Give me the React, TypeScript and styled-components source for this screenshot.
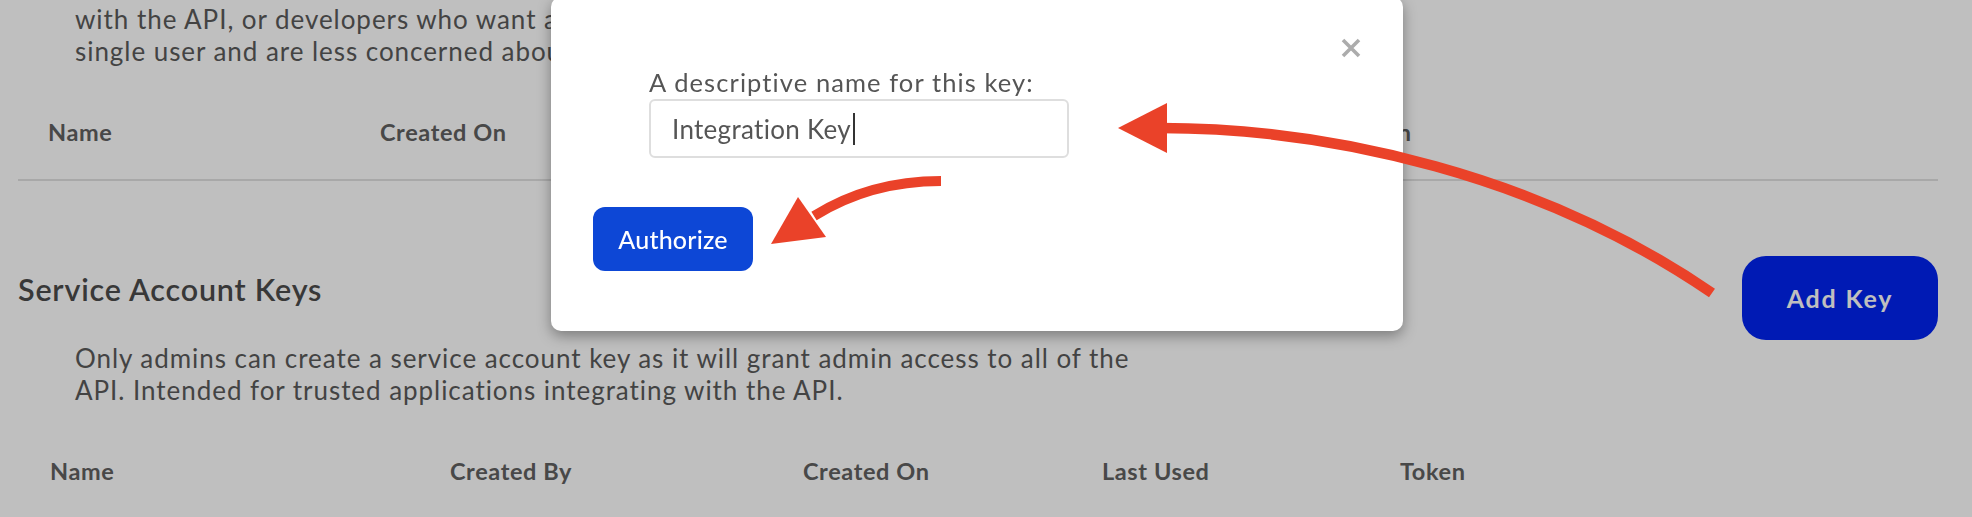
import React from 'react'
import styled, { createGlobalStyle } from 'styled-components'

const GlobalStyle = createGlobalStyle`
  html, body {
    margin: 0;
    height: 100%;
    overflow: hidden;
    background: #ffffff;
  }
  body {
    font-family: Lato, 'Open Sans', sans-serif;
  }
`

const Page = styled.div`
  position: relative;
  padding: 3px 34px 0 18px;
  height: 517px;
  box-sizing: border-box;
`

const Blurb = styled.p`
  margin: ${p => p.$top || 0}px 0 0 57px;
  max-width: 1078px;
  font-size: 26px;
  line-height: 32px;
  letter-spacing: 0.95px;
  color: #5a5a5a;
`

const HeaderRow = styled.div`
  display: grid;
  grid-template-columns: ${p => p.$cols};
  margin-top: 50px;
  padding-left: ${p => p.$inset}px;
`

const HeaderCell = styled.div`
  font-size: 23.5px;
  line-height: 30px;
  font-weight: 700;
  letter-spacing: 0.6px;
  color: #616161;
  white-space: nowrap;
`

const Divider = styled.hr`
  margin: 32px 0 0;
  border: 0;
  height: 2px;
  background: #e0e0e0;
`

const SectionRow = styled.div`
  display: flex;
  justify-content: space-between;
  align-items: flex-start;
  margin-top: 75px;
`

const SectionTitle = styled.h2`
  margin: 15px 0 0;
  font-size: 30.5px;
  line-height: 36px;
  font-weight: 600;
  letter-spacing: 0.8px;
  color: #4b4b4b;
`

const PrimaryButton = styled.button`
  width: ${p => p.$w}px;
  height: ${p => p.$h}px;
  border: 0;
  border-radius: ${p => p.$radius}px;
  background: ${p => p.$bg};
  color: #ffffff;
  font-family: Lato, sans-serif;
  font-size: ${p => p.$size}px;
  font-weight: ${p => p.$weight};
  letter-spacing: ${p => p.$spacing}px;
  padding: 0;
  cursor: pointer;
`

const Backdrop = styled.div`
  position: fixed;
  inset: 0;
  background: rgba(0, 0, 0, 0.25);
`

const Modal = styled.div`
  position: absolute;
  left: 551px;
  top: -3px;
  width: 852px;
  height: 334px;
  box-sizing: border-box;
  padding: 70px 42px 0;
  background: #ffffff;
  border-radius: 10px;
  box-shadow: 0 5px 14px rgba(0, 0, 0, 0.35);
`

const CloseButton = styled.button`
  position: absolute;
  top: 41px;
  right: 42px;
  width: 20px;
  height: 20px;
  padding: 0;
  border: 0;
  background: none;
  cursor: pointer;
  filter: blur(0.4px);
`

const Field = styled.div`
  margin-left: 56px;
  display: flex;
  flex-direction: column;
  gap: 2px;
`

const Label = styled.label`
  font-size: 25.5px;
  line-height: 30px;
  letter-spacing: 1.1px;
  color: #555555;
`

const TextBox = styled.div`
  width: 420px;
  height: 59px;
  box-sizing: border-box;
  display: flex;
  align-items: center;
  padding-left: 21px;
  border: 2px solid #dedede;
  border-radius: 6px;
  font-size: 26px;
  letter-spacing: 0.3px;
  color: #555555;
`

const Caret = styled.span`
  display: inline-block;
  width: 2px;
  height: 32px;
  margin-left: 2px;
  background: #333333;
`

const Actions = styled.div`
  margin-top: 49px;
`

const Annotations = styled.svg`
  position: absolute;
  left: 0;
  top: 0;
  pointer-events: none;
`

const ARROW = '#ea4229'

export default function App() {
  return (
    <>
      <GlobalStyle />
      <Page>
        <Blurb>
          with the API, or developers who want a quick way to get started. Keys belong to a
          <br />
          single user and are less concerned about fine grained access.
        </Blurb>
        <HeaderRow $cols="332px 770px 196px auto" $inset={30}>
          <HeaderCell>Name</HeaderCell>
          <HeaderCell>Created On</HeaderCell>
          <HeaderCell>Last Used</HeaderCell>
          <HeaderCell>Token</HeaderCell>
        </HeaderRow>
        <Divider />

        <SectionRow>
          <SectionTitle>Service Account Keys</SectionTitle>
          <PrimaryButton $w={196} $h={84} $radius={24} $bg="#0023f1" $size={25} $weight={700} $spacing={1.8}>
            Add Key
          </PrimaryButton>
        </SectionRow>
        <Blurb $top={2}>
          Only admins can create a service account key as it will grant admin access to all of the
          API. Intended for trusted applications integrating with the API.
        </Blurb>
        <HeaderRow $cols="400px 353px 299px 298px auto" $inset={32}>
          <HeaderCell>Name</HeaderCell>
          <HeaderCell>Created By</HeaderCell>
          <HeaderCell>Created On</HeaderCell>
          <HeaderCell>Last Used</HeaderCell>
          <HeaderCell>Token</HeaderCell>
        </HeaderRow>

        <Backdrop />

        <Modal role="dialog">
          <CloseButton aria-label="Close">
            <svg width="20" height="20" viewBox="0 0 20 20">
              <path d="M2 2 L18 18 M18 2 L2 18" stroke="#acacac" strokeWidth="3.6" />
            </svg>
          </CloseButton>
          <Field>
            <Label>A descriptive name for this key:</Label>
            <TextBox>
              Integration Key
              <Caret />
            </TextBox>
          </Field>
          <Actions>
            <PrimaryButton $w={160} $h={64} $radius={12} $bg="#0d47d6" $size={25} $weight={500} $spacing={0.2}>
              Authorize
            </PrimaryButton>
          </Actions>
        </Modal>

        <Annotations width="1972" height="517" viewBox="0 0 1972 517">
          <path d="M941 181 Q870 181 814 216" fill="none" stroke={ARROW} strokeWidth="10" />
          <polygon points="798,197 771,244 826,237" fill={ARROW} />
          <path d="M1160 128 C1330 128 1540 175 1712 293" fill="none" stroke={ARROW} strokeWidth="10.5" />
          <polygon points="1118,128 1167,103 1167,153" fill={ARROW} />
        </Annotations>
      </Page>
    </>
  )
}
